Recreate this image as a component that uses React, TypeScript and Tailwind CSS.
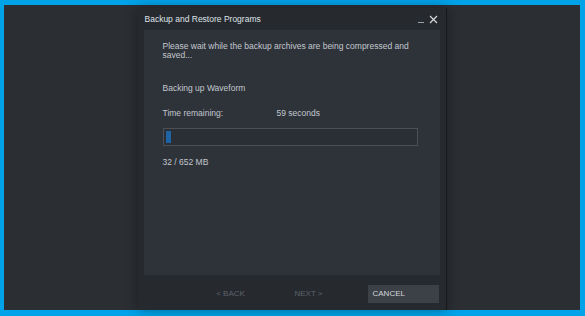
export default function App() {
  return (
    <div
      className="w-[585px] h-[316px] bg-[#00a2e8] pt-[5px] pl-[4px] pr-[5px] pb-[6px]"
      style={{ fontFamily: '"Liberation Sans", Arial, sans-serif' }}
    >
      <div className="w-full h-full bg-[#2b2e33] flex justify-center pt-[3px]">
        <div className="w-[309px] h-full bg-[#26292e] flex flex-col border-r border-[#16181b] shadow-[0_0_12px_rgba(0,0,0,0.35)]">
          <div className="h-[22px] flex items-center justify-between pl-[7px] pr-[8px]">
            <span className="text-[8.5px] text-[#dfe3e8]">Backup and Restore Programs</span>
            <div className="flex items-center gap-[5px] text-[#c9ced4]">
              <span className="w-[6px] h-[1px] bg-[#9aa0a7] mt-[6px]" />
              <svg width="9" height="9" viewBox="0 0 9 9">
                <path d="M1 1 L8 8 M8 1 L1 8" stroke="#d6dade" strokeWidth="1.2" />
              </svg>
            </div>
          </div>
          <div className="mx-[6px] h-[245px] bg-[#2e3239] flex flex-col pl-[19px] pr-[10px] pt-[12px]">
            <p className="text-[8.5px] leading-[9px] text-[#c3c8cf] w-[250px]">
              Please wait while the backup archives are being compressed and saved...
            </p>
            <p className="text-[8.5px] text-[#c3c8cf] mt-[22px]">Backing up Waveform</p>
            <div className="flex text-[8.5px] text-[#c3c8cf] mt-[12px]">
              <span className="w-[114px]">Time remaining:</span>
              <span>59 seconds</span>
            </div>
            <div className="mt-[8px] w-[255px] h-[18px] border border-[#4b5058] bg-[#2a2e35] p-[2px] flex">
              <div className="w-[5px] h-full bg-[#1e63a3]" />
            </div>
            <p className="text-[8.5px] text-[#c3c8cf] mt-[10px]">32 / 652 MB</p>
          </div>
          <div className="flex-1 flex items-start pt-[10px] pl-[73px] text-[8px]">
            <div className="w-[40px] h-[18px] flex items-center justify-center text-[#5d636b]">&lt; BACK</div>
            <div className="w-[40px] ml-[38px] h-[18px] flex items-center justify-center text-[#5d636b]">NEXT &gt;</div>
            <div className="ml-[39px] w-[71px] h-[18px] bg-[#3c4047] flex items-center pl-[5px] text-[#d3d7dc]">CANCEL</div>
          </div>
        </div>
      </div>
    </div>
  );
}
